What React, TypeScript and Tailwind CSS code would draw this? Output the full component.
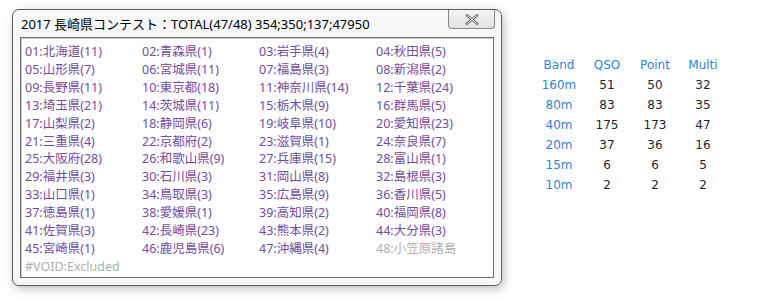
import React from "react";

const items: { t: string; g?: boolean }[] = [
  { t: "01:北海道(11)" }, { t: "02:青森県(1)" }, { t: "03:岩手県(4)" }, { t: "04:秋田県(5)" },
  { t: "05:山形県(7)" }, { t: "06:宮城県(11)" }, { t: "07:福島県(3)" }, { t: "08:新潟県(2)" },
  { t: "09:長野県(11)" }, { t: "10:東京都(18)" }, { t: "11:神奈川県(14)" }, { t: "12:千葉県(24)" },
  { t: "13:埼玉県(21)" }, { t: "14:茨城県(11)" }, { t: "15:栃木県(9)" }, { t: "16:群馬県(5)" },
  { t: "17:山梨県(2)" }, { t: "18:静岡県(6)" }, { t: "19:岐阜県(10)" }, { t: "20:愛知県(23)" },
  { t: "21:三重県(4)" }, { t: "22:京都府(2)" }, { t: "23:滋賀県(1)" }, { t: "24:奈良県(7)" },
  { t: "25:大阪府(28)" }, { t: "26:和歌山県(9)" }, { t: "27:兵庫県(15)" }, { t: "28:富山県(1)" },
  { t: "29:福井県(3)" }, { t: "30:石川県(3)" }, { t: "31:岡山県(8)" }, { t: "32:島根県(3)" },
  { t: "33:山口県(1)" }, { t: "34:鳥取県(3)" }, { t: "35:広島県(9)" }, { t: "36:香川県(5)" },
  { t: "37:徳島県(1)" }, { t: "38:愛媛県(1)" }, { t: "39:高知県(2)" }, { t: "40:福岡県(8)" },
  { t: "41:佐賀県(3)" }, { t: "42:長崎県(23)" }, { t: "43:熊本県(2)" }, { t: "44:大分県(3)" },
  { t: "45:宮崎県(1)" }, { t: "46:鹿児島県(6)" }, { t: "47:沖縄県(4)" }, { t: "48:小笠原諸島", g: true },
];

const rows = [
  ["160m", "51", "50", "32"],
  ["80m", "83", "83", "35"],
  ["40m", "175", "173", "47"],
  ["20m", "37", "36", "16"],
  ["15m", "6", "6", "5"],
  ["10m", "2", "2", "2"],
];

export default function App() {
  return (
    <div className="w-[768px] h-[299px] bg-white flex items-start overflow-hidden">
      <div className="ml-[12px] mt-[9px] w-[490px] h-[277px] rounded-[7px] border border-[#5e5e5e] bg-[#f7f7f7] shadow-[2px_3px_10px_rgba(0,0,0,0.25)] flex flex-col px-[7px] pb-[7px]">
        <div className="h-[27px] flex items-start justify-between">
          <div
            className="pl-[1px] pt-[4px] text-[13px] leading-[20px] text-black whitespace-nowrap"
            style={{ fontFamily: '"Noto Sans", "Noto Sans CJK JP", sans-serif' }}
          >
            2017 長崎県コンテスト：TOTAL(47/48) 354;350;137;47950
          </div>
          <div className="w-[47px] h-[19px] -mr-[1px] shrink-0 rounded-b-[4px] border border-t-0 border-[#8a8a8a] bg-gradient-to-b from-[#f4f4f4] to-[#e2e2e2] flex items-center justify-center">
            <svg width="14" height="11" viewBox="0 0 14 11">
              <path d="M2 1.5 L12 9.5 M12 1.5 L2 9.5" stroke="#6a6a6a" strokeWidth="2.8" strokeLinecap="round" fill="none" />
              <path d="M2 1.5 L12 9.5 M12 1.5 L2 9.5" stroke="#f0f0f0" strokeWidth="1" strokeLinecap="round" fill="none" />
            </svg>
          </div>
        </div>
        <div
          className="flex-1 bg-white border border-[#6e6e6e] shadow-[inset_1px_1px_0_#c8c8c8] pl-[4px] pt-[5px]"
          style={{ fontFamily: '"Noto Sans", "Noto Sans CJK JP", sans-serif' }}
        >
          <div className="grid grid-cols-[117px_117px_117px_117px] text-[12.5px] leading-[17.9px]">
            {items.map((it) => (
              <div key={it.t} className={it.g ? "text-[#b0b0b0]" : "text-[#744ca0]"}>
                {it.t}
              </div>
            ))}
            <div className="text-[#b0b0b0]">#VOID:Excluded</div>
          </div>
        </div>
      </div>
      <div
        className="ml-[33px] mt-[55px] text-[12px] leading-[20px]"
        style={{ fontFamily: '"DejaVu Sans", sans-serif' }}
      >
        <div className="grid grid-cols-[48px_48px_48px_48px] text-center">
          <div className="text-[#2d84d2]">Band</div>
          <div className="text-[#2d84d2]">QSO</div>
          <div className="text-[#2d84d2]">Point</div>
          <div className="text-[#2d84d2]">Multi</div>
          {rows.map((r) => (
            <React.Fragment key={r[0]}>
              <div className="text-[#2d84d2]">{r[0]}</div>
              <div className="text-[#1a1f3a]">{r[1]}</div>
              <div className="text-[#1a1f3a]">{r[2]}</div>
              <div className="text-[#1a1f3a]">{r[3]}</div>
            </React.Fragment>
          ))}
        </div>
      </div>
    </div>
  );
}
